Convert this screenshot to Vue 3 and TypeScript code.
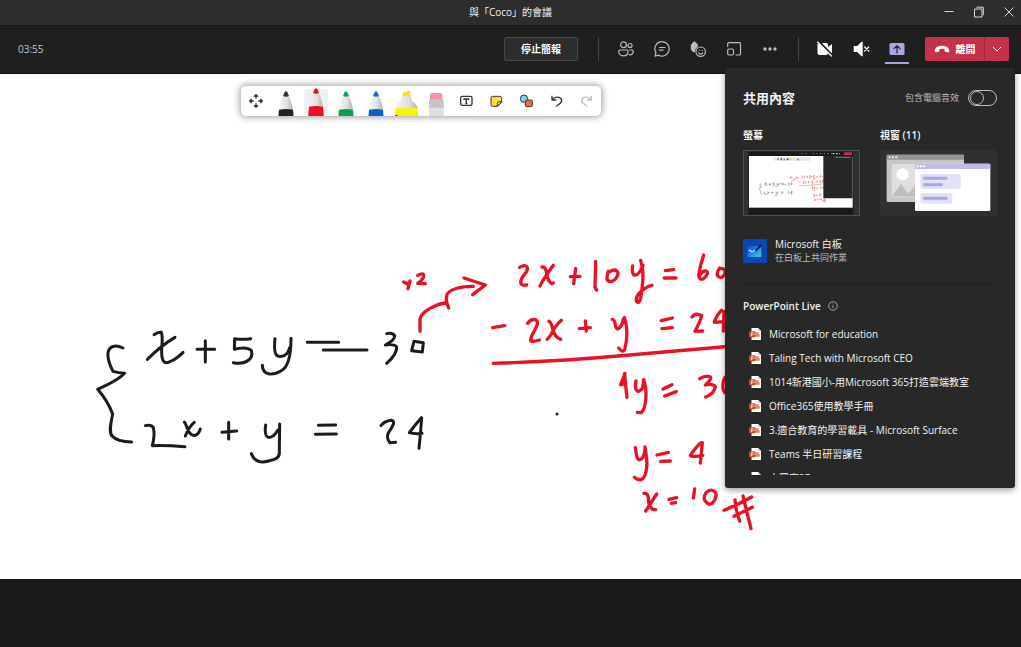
<script setup lang="ts">
import { ref } from 'vue'

interface Pen {
  label: string
  color: string
  tip: string
}

const pens: Pen[] = [
  { label: '黑色畫筆', color: '#222222', tip: '#333333' },
  { label: '紅色畫筆', color: '#e81224', tip: '#e81224' },
  { label: '綠色畫筆', color: '#0f9d4f', tip: '#12a354' },
  { label: '藍色畫筆', color: '#0a63c0', tip: '#1a6fc9' },
]
const activePen = ref(1)
const includeSound = ref(false)

const files: string[] = [
  'Microsoft for education',
  'Taling Tech with Microsoft CEO',
  '1014新港國小-用Microsoft 365打造雲端教室',
  'Office365使用教學手冊',
  '3.適合教育的學習載具 - Microsoft Surface',
  'Teams 半日研習課程',
  '大眾寓3D',
]
</script>

<template>
  <div class="app">
    <header class="titlebar">
      <h1 class="title">與「Coco」的會議</h1>
      <div class="window-controls">
        <button type="button" aria-label="最小化">
          <svg width="12" height="12" viewBox="0 0 12 12"><path d="M1.5 5.5h9" /></svg>
        </button>
        <button type="button" aria-label="還原">
          <svg width="12" height="12" viewBox="0 0 12 12"><path d="M1.5 3h7.500v8H1.500zM3.500 1.200H10.300v8" /></svg>
        </button>
        <button type="button" aria-label="關閉">
          <svg width="12" height="12" viewBox="0 0 12 12"><path d="M1.500 1.500l9 9M10.500 1.500l-9 9" /></svg>
        </button>
      </div>
    </header>

    <nav class="toolbar">
      <time class="timer">03:55</time>
      <button type="button" class="stop">停止簡報</button>
      <span class="rule rule-first"></span>
      <button type="button" class="tool" aria-label="參與者">
        <svg width="18" height="18" viewBox="0 0 18 18">
          <circle cx="6.500" cy="4.800" r="2.900" /><circle cx="13" cy="5.500" r="2" />
          <path d="M1.700 11.200c0-.7.500-1.200 1.200-1.200h7c.7 0 1.200.5 1.200 1.200 0 3-1.700 4.700-4.700 4.700s-4.700-1.700-4.700-4.700zM12.800 10h2.200c.8 0 1.300.5 1.300 1.200 0 2.400-1.400 3.700-4 3.600" />
        </svg>
      </button>
      <button type="button" class="tool" aria-label="聊天">
        <svg width="18" height="18" viewBox="0 0 18 18">
          <path d="M9 1.700a7.200 7.200 0 1 1-3.400 13.500L2 16.200l1-3.500A7.200 7.200 0 0 1 9 1.700zM6.500 7.500h5.500M6.500 10.200h3.500" />
        </svg>
      </button>
      <button type="button" class="tool" aria-label="反應">
        <svg width="18" height="18" viewBox="0 0 18 18">
          <path class="solid" d="M1.800 8.500V4.600q.6-.8 1.200 0V2.800q.7-.8 1.400 0V1.700q.7-.8 1.500 0v.8q.8-.8 1.500 0v1.300q.7-.6 1.300.2v3q-2.700 1.400-2.900 5.500C3.600 12.200 2.300 10.500 1.800 8.500z" />
          <circle cx="11.700" cy="11.700" r="4.700" />
          <path d="M9.700 12.900c1 1.500 3 1.500 4 0M10.200 10.300h.1M13.200 10.300h.1" />
        </svg>
      </button>
      <button type="button" class="tool" aria-label="分組討論室">
        <svg width="18" height="18" viewBox="0 0 18 18">
          <path d="M2.700 6.500V4c0-.8.500-1.300 1.300-1.300h10.200c.8 0 1.300.5 1.300 1.300v9.700c0 .8-.5 1.300-1.300 1.300H11" />
          <rect x="2.700" y="9" width="5.800" height="6" rx="1.200" />
        </svg>
      </button>
      <button type="button" class="tool" aria-label="更多動作">
        <svg width="18" height="18" viewBox="0 0 18 18">
          <g class="solid"><circle cx="4" cy="9" r="1.700" /><circle cx="9" cy="9" r="1.700" /><circle cx="14" cy="9" r="1.700" /></g>
        </svg>
      </button>
      <span class="rule rule-second"></span>
      <button type="button" class="tool bright" aria-label="開啟相機">
        <svg width="18" height="18" viewBox="0 0 18 18">
          <path class="solid" d="M3.500 3h6.500c1.100 0 2 .9 2 2v2l4-3v10l-4-3v2c0 1.100-.9 2-2 2H3.500c-1.100 0-2-.9-2-2V5c0-1.100.9-2 2-2z" />
          <path class="cut" d="M2.500 1l14 14.500" /><path d="M1.500 2l14 14" />
        </svg>
      </button>
      <button type="button" class="tool bright" aria-label="關閉音訊">
        <svg width="18" height="18" viewBox="0 0 18 18">
          <path class="solid" d="M1.700 6h3.500L9.500 1.800h1.200v14.400H9.500L5.200 12H1.700z" />
          <path d="M12.700 7l4 4M16.700 7l-4 4" />
        </svg>
      </button>
      <button type="button" class="tool sharing" aria-label="分享">
        <svg width="18" height="18" viewBox="0 0 18 18">
          <rect x="1.500" y="3" width="15" height="12" rx="1.500" />
          <path d="M9 13V6M6 8.700l3-3 3 3" />
        </svg>
      </button>
      <div class="leave">
        <button type="button" class="hang-up">
          <svg width="16" height="16" viewBox="0 0 16 16"><path d="M.8 10.300c-.4-3.200 2.700-5.600 7.200-5.600s7.600 2.400 7.200 5.600c-.1.700-.6 1-1.200.9l-2.400-.5c-.6-.1-1-.5-1-1.100V8.200c-1.600-.6-3.600-.6-5.200 0v1.400c0 .6-.4 1-1 1.100l-2.400.5c-.6.100-1.100-.2-1.200-.9z" /></svg>
          <span>離開</span>
        </button>
        <button type="button" class="leave-more" aria-label="離開選項">
          <svg width="10" height="10" viewBox="0 0 10 10"><path d="M1 3l4 4 4-4" /></svg>
        </button>
      </div>
    </nav>

    <main class="stage">
      <svg class="board" viewBox="0 0 1021 505" preserveAspectRatio="xMinYMin meet" role="img" aria-label="白板上的聯立方程式">
        <g id="ink" class="ink">
          <g class="black" transform="translate(80 236) scale(.33333)">
            <path d="M129 114C105 103 88 108 84 128C81 150 91 168 99 184Q116 189 134 190C112 213 85 223 53 238Q82 271 98 312C93 337 85 367 97 379Q111 395 155 396" />
            <path d="M222 74Q235 65 244 67C252 87 240 123 247 145Q251 166 274 153Q290 146 309 127M285 82C252 101 226 124 202 148" />
            <path d="M351 118L404 118M376 92L376 156M512 86Q487 90 464 86L463 118Q498 108 514 121C522 149 494 165 460 158" />
            <path d="M585 86C582 113 584 137 596 139Q621 143 629 113M633 85C633 128 627 171 604 182C577 198 548 196 547 166" />
            <path d="M682 97L776 97M730 120L861 120M920 71Q937 66 944 77Q945 90 916 105Q944 101 950 111C951 127 936 146 920 160" />
            <path d="M1002 94L1030 98L1027 126L995 122Z" />
            <path d="M196 347Q214 342 220 353C224 369 222 388 217 407Q262 406 315 410M313 336C323 347 322 373 340 376Q354 378 361 357M343 337Q327 350 316 378" />
            <path d="M426 367L470 363M446 337L446 387M557 345C554 366 556 379 565 382Q580 384 594 360M599 342L598 427C599 444 586 449 566 453Q527 464 514 431" />
            <path d="M715 346L767 345M706 373L769 372M903 347Q914 333 934 331C949 334 937 350 925 369Q918 384 930 398L947 397M1024 323Q1004 346 988 368Q1004 373 1026 370M1025 324Q1022 368 1017 415" />
          </g>
          <g class="red" transform="translate(390 176) scale(.33333)">
            <path d="M41 96L53 102M60 93L54 116M83 76Q101 66 101 78Q101 88 83 100L106 101M90 244L90 208C93 183 145 160 167 159M176 174Q166 153 170 137C174 116 220 108 250 109M222 84L286 105L248 134" />
            <path d="M389 52Q407 41 412 53C416 69 393 77 392 96Q392 108 410 105M456 51Q468 50 470 71Q474 94 485 101L490 99M490 46Q475 67 459 91L450 108" />
            <path d="M557 56L551 101M541 80L570 79M617 34L615 112L620 120M655 64Q649 82 652 90C665 104 684 83 684 69Q678 52 656 67M728 48Q724 73 734 75Q745 79 759 46M752 31Q763 70 757 105Q753 159 744 157C728 151 749 116 786 106" />
            <path d="M826 62L851 59M823 84L858 84M941 15Q930 48 926 75C928 104 956 76 952 66C946 56 930 69 927 81M989 54Q980 65 982 76C992 92 1010 75 1004 58Z" />
            <path d="M308 233L344 227M413 220Q421 206 437 209C455 220 424 247 422 270Q424 278 448 270M477 214Q484 217 488 237Q494 262 512 268M514 211Q494 229 483 254L472 268" />
            <path d="M586 213L589 243M568 236L601 233M667 208Q675 209 676 226C679 249 697 230 700 207M703 203C715 236 710 275 704 299Q699 310 686 294" />
            <path d="M814 212L847 204M816 236L847 233M906 201Q917 187 935 197Q930 216 915 244L938 243M994 181Q977 200 973 217L1013 214M1002 184L1000 243M310 340Q520 333 684 318L1030 288" />
          </g>
          <g class="red" transform="translate(540 276) scale(.33333)">
            <path d="M255 71L242 104Q250 106 255 90M254 70Q256 105 261 142M288 93C283 118 291 136 308 114L311 89C322 121 320 171 304 188L292 187" />
            <path d="M369 117L396 104M374 138L409 125M479 86Q502 73 512 82Q513 91 496 105Q519 99 526 110Q524 130 497 141M565 76C546 79 543 126 559 130Q579 118 573 95" />
            <path d="M286 293C289 314 291 337 304 327Q316 315 315 291C318 313 323 333 320 352C316 388 302 398 283 382" />
            <path d="M351 315L385 307M362 334L391 333M483 278Q466 292 451 317Q463 322 488 316M487 278L481 339M312 430Q326 427 326 455Q330 480 347 479M350 432L317 483" />
            <path d="M387 448L410 443M394 460L407 458M464 417L460 444M499 427Q486 446 499 457C514 476 532 443 527 428Q514 413 499 427" />
            <path d="M552 481Q596 463 635 441M582 499L637 472M585 450Q588 488 599 513M609 438Q621 488 633 536" />
          </g>
        </g>
        <circle class="dot" cx="557" cy="340" r="1.500" />
      </svg>

      <div class="pen-bar" role="toolbar" aria-label="畫筆工具">
        <button type="button" aria-label="移動工具列">
          <svg viewBox="0 0 90 90">
            <g class="line"><path d="M39 32l6-6 6 6M39 58l6 6 6-6M32 39l-6 6 6 6M58 39l6 6-6 6M45 27v11M45 52v11M27 45h11M52 45h11" /></g>
          </svg>
        </button>
        <button
          v-for="(pen, i) in pens"
          :key="pen.label"
          type="button"
          :aria-label="pen.label"
          :aria-pressed="activePen === i"
          @click="activePen = i"
        >
          <svg viewBox="0 0 90 90">
            <defs>
              <linearGradient id="barrel"><stop offset="0" stop-color="#f4f4f4" /><stop offset=".55" stop-color="#e2e2e2" /><stop offset="1" stop-color="#b4b4b4" /></linearGradient>
            </defs>
            <rect v-if="activePen === i" x="10" y="9" width="71" height="72" rx="6" fill="#efefef" />
            <g :transform="activePen === i ? 'translate(0 -9)' : undefined">
              <path d="M37 29h16c7 14 11 28 13 42H24c2-14 6-28 13-42z" fill="url(#barrel)" />
              <path d="M41 18q4-4 8 0l5 12q-9 4-18 0z" :fill="pen.tip" />
              <path d="M24 71q21-4 42 0l3 34H21z" :fill="pen.color" />
            </g>
          </svg>
        </button>
        <button type="button" aria-label="螢光筆">
          <svg viewBox="0 0 90 90">
            <path d="M36 19l22-5v18H34z" fill="#ffe600" />
            <path d="M32 30h28l3 16q15 8 17 22H14q2-14 15-22z" fill="url(#barrel)" />
            <path d="M14 67h66l2 23H12z" fill="#fbf500" /><circle cx="16" cy="90" r="4" fill="#e81224" />
          </svg>
        </button>
        <button type="button" aria-label="橡皮擦">
          <svg viewBox="0 0 90 90">
            <path d="M27 42V28q0-7 7-7h23q7 0 7 7v14z" fill="#f993a4" />
            <path d="M24 41h44v50H24z" fill="#dedfe2" /><path d="M24 41h44v24H24z" fill="#c4c5c9" />
          </svg>
        </button>
        <button type="button" aria-label="文字">
          <svg viewBox="0 0 90 90">
            <g class="line"><rect x="29" y="31" width="34" height="27" rx="5" /><path d="M39 42v-3h14v3M46 39v14M43 53h6" /></g>
          </svg>
        </button>
        <button type="button" aria-label="便利貼">
          <svg viewBox="0 0 90 90">
            <path class="edge" d="M35 31h21q6 0 6 6v12L50 61H35q-5 0-5-5V36q0-5 5-5z" fill="#ffdb3b" />
            <path class="edge" d="M62 47h-8q-5 0-5 5v9z" fill="#fff0a0" />
          </svg>
        </button>
        <button type="button" aria-label="圖形">
          <svg viewBox="0 0 90 90">
            <circle class="edge" cx="39" cy="38" r="11" fill="#83cdf2" />
            <rect class="edge" x="43" y="42" width="21" height="20" rx="4" fill="#f36b3b" />
          </svg>
        </button>
        <button type="button" aria-label="復原">
          <svg viewBox="0 0 90 90"><g class="line"><path d="M33 29v13h13M34 41c9-12 27-9 28 3 0 8-9 11-17 17" /></g></svg>
        </button>
        <button type="button" aria-label="取消復原">
          <svg viewBox="0 0 90 90"><g class="line faded"><path d="M61 29v13H48M60 41c-9-12-27-9-28 3 0 8 9 11 17 17" /></g></svg>
        </button>
      </div>
    </main>

    <footer class="base"></footer>

    <aside class="panel" aria-label="共用內容">
      <div class="panel-head">
        <h2>共用內容</h2>
        <label for="sound">包含電腦音效</label>
        <input id="sound" v-model="includeSound" type="checkbox" role="switch" />
      </div>

      <div class="sources">
        <section>
          <h3>螢幕</h3>
          <button type="button" class="thumb screen" aria-label="共用螢幕">
            <svg viewBox="0 0 351 198">
              <rect width="351" height="198" fill="#303030" />
              <rect x="16" y="5" width="315" height="189" fill="#191919" />
              <rect x="18" y="18" width="311" height="155" fill="#fff" />
              <rect x="91" y="22" width="113" height="10" rx="4" fill="#e6e6e6" />
              <path d="M105 30v-5m10 5v-6m20 6v-5" stroke="#444" stroke-width="3" />
              <path d="M115 31v-6m50 6v-5" stroke="#e81224" stroke-width="4" />
              <path d="M124 31v-5" stroke="#0f9d4f" stroke-width="4" /><path d="M133 31v-5" stroke="#0a63c0" stroke-width="4" />
              <path d="M142 31v-6" stroke="#e8e100" stroke-width="5" />
              <use href="#ink" transform="translate(18 19) scale(.305)" />
              <path d="M241 17h88v128h-88z" fill="#262626" />
              <path d="M176 11h16M209 11h60" stroke="#888" stroke-width="3" stroke-dasharray="4 7" />
              <path d="M269 11h22" stroke="#ddd" stroke-width="4" stroke-dasharray="5 5" />
              <path d="M303 11h24" stroke="#c4314b" stroke-width="8" />
              <path d="M276 22h46" stroke="#777" stroke-width="3" />
            </svg>
          </button>
        </section>
        <section>
          <h3>視窗 (11)</h3>
          <button type="button" class="thumb" aria-label="共用視窗">
            <svg viewBox="0 0 351 198">
              <rect x="20" y="14" width="232" height="142" rx="4" fill="#c8c6c4" />
              <path d="M24 14h224q4 0 4 4v11H20V18q0-4 4-4z" fill="#979593" />
              <path d="M26 22h28" stroke="#e8e8e8" stroke-width="6" stroke-dasharray="6 4" />
              <rect x="35" y="42" width="100" height="100" fill="#e1dfdd" />
              <circle cx="68" cy="73" r="18" fill="#fff" />
              <path d="M35 139l28-38 22 31 25-32 30 40z" fill="#c0bebc" />
              <rect x="105" y="41" width="226" height="142" rx="4" fill="#fff" />
              <path d="M109 41h218q4 0 4 4v12H105V45q0-4 4-4z" fill="#bdbde6" />
              <path d="M110 49h28" stroke="#fff" stroke-width="6" stroke-dasharray="6 4" />
              <rect x="121" y="71" width="121" height="46" rx="6" fill="#e2e2f6" />
              <rect x="121" y="129" width="96" height="32" rx="6" fill="#e2e2f6" />
              <path d="M130 85h72M130 104h58M130 145h72" stroke="#a6a7dc" stroke-width="9" />
            </svg>
          </button>
        </section>
      </div>

      <button type="button" class="whiteboard">
        <svg width="24" height="24" viewBox="0 0 72 72">
          <defs><linearGradient id="sea" x2="1" y2="1"><stop offset="0" stop-color="#1a3cff" /><stop offset=".5" stop-color="#1b8cf0" /><stop offset="1" stop-color="#35d6c8" /></linearGradient></defs>
          <rect width="72" height="72" rx="2" fill="#0a47b0" />
          <path d="M14 21h41v33H19q-5 0-5-5z" fill="url(#sea)" />
          <path d="M18 34q5-4 8 5 6-1 11-6" fill="none" stroke="#fff" stroke-width="3" stroke-linecap="round" />
          <path d="M37 35l19-17" stroke="#14223a" stroke-width="6" />
        </svg>
        <span class="whiteboard-text">
          <span class="name">Microsoft 白板</span>
          <span class="hint">在白板上共同作業</span>
        </span>
      </button>

      <div class="live-head">
        <h3>PowerPoint Live</h3>
        <svg width="10" height="10" viewBox="0 0 10 10"><circle cx="5" cy="5" r="4.300" /><path d="M5 4.500v2.800M5 2.600v.8" /></svg>
      </div>
      <ul class="files">
        <li v-for="name in files" :key="name">
          <button type="button">
            <svg width="12" height="12" viewBox="0 0 12 12">
              <path d="M2.500 0H9l3 3v9H2.500z" fill="#fff" /><path d="M9 0v3h3z" fill="#cfcfcf" />
              <path d="M6.500 4.500a2.500 2.500 0 0 1 3.500 3.500H6.500z" fill="#f0906f" /><path d="M6.500 8h4.300" stroke="#d35230" />
              <rect y="3.200" width="6.500" height="6" rx=".8" fill="#d24726" />
              <path d="M2.400 8.200V4.600h1.200q1.100 0 1.100 1.100T3.600 6.800H2.400" fill="none" stroke="#fff" stroke-width=".7" />
            </svg>
            <span>{{ name }}</span>
          </button>
        </li>
      </ul>
    </aside>
  </div>
</template>

<style>
body {
  margin: 0;
  background: #1a1a1a;
}
</style>

<style scoped>
.app {
  position: relative;
  display: flex;
  flex-direction: column;
  min-height: 100vh;
  overflow: hidden;
  color: #f3f3f3;
  font-family: 'Open Sans', 'Noto Sans CJK TC', sans-serif;
  font-size: 10px;
  line-height: 16px;
}
* {
  box-sizing: border-box;
}
h1,
h2,
h3,
ul {
  margin: 0;
  padding: 0;
}
button {
  margin: 0;
  padding: 0;
  border: 0;
  background: none;
  color: inherit;
  font: inherit;
  cursor: pointer;
}
svg {
  display: block;
}

.titlebar {
  display: grid;
  grid-template-columns: 1fr auto 1fr;
  align-items: center;
  height: 26px;
  padding-bottom: 2px;
  border-bottom: 1px solid #171717;
  background: #2d2d2d;
}
.title {
  grid-column: 2;
  font-size: 10px;
  font-weight: 400;
}
.window-controls {
  display: flex;
  justify-content: flex-end;
  gap: 18px;
  padding-right: 6px;
}
.window-controls svg {
  fill: none;
  stroke: #d8d8d8;
  stroke-width: 1;
}

.toolbar {
  display: flex;
  align-items: center;
  height: 48px;
  padding: 0 12px 2px 18px;
  border-bottom: 1px solid #141414;
  background: #1f1f1f;
}
.timer {
  margin-right: auto;
  color: #c8c8c8;
}
.stop {
  width: 74px;
  height: 24px;
  border: 1px solid #484848;
  border-radius: 2px;
  background: #2d2d2d;
  color: #fff;
  font-weight: 600;
}
.rule {
  width: 1px;
  height: 24px;
  background: #484848;
}
.rule-first {
  margin: 0 9px 0 20px;
}
.rule-second {
  margin: 0 8px 0 10px;
}
.tool {
  display: grid;
  place-items: center;
  width: 36px;
  height: 30px;
}
.tool svg {
  fill: none;
  stroke: #bdbdbd;
  stroke-width: 1.2;
  stroke-linecap: round;
  stroke-linejoin: round;
}
.tool .solid {
  fill: #bdbdbd;
  stroke: none;
}
.bright svg {
  stroke: #fff;
}
.bright .solid {
  fill: #fff;
}
.bright .cut {
  stroke: #1f1f1f;
  stroke-width: 2;
}
.sharing {
  background: linear-gradient(#a6a7dc, #a6a7dc) center bottom / 24px 2px no-repeat;
}
.sharing rect {
  fill: #a6a7dc;
  stroke: none;
}
.sharing path {
  stroke: #252540;
}
.leave {
  display: flex;
  width: 84px;
  height: 24px;
  margin-left: 10px;
  border-radius: 2px;
  background: #c4314b;
  color: #fff;
  font-weight: 700;
}
.hang-up {
  display: flex;
  flex: 1;
  align-items: center;
  justify-content: center;
  gap: 6px;
}
.hang-up svg {
  fill: #fff;
}
.leave-more {
  display: grid;
  place-items: center;
  width: 25px;
  border-left: 1px solid #a5283f;
}
.leave-more svg {
  fill: none;
  stroke: #fff;
}

.stage {
  position: relative;
  flex: 1;
  background: #fff;
}
.board {
  width: 100%;
}
.ink {
  fill: none;
  stroke-linecap: round;
  stroke-linejoin: round;
}
.black {
  stroke: #1c1c1c;
  stroke-width: 9;
}
.red {
  stroke: #e81224;
  stroke-width: 10;
}
.dot {
  fill: #1c1c1c;
}
.pen-bar {
  position: absolute;
  top: 12px;
  left: 241px;
  display: flex;
  border-radius: 5px;
  background: #fff;
  box-shadow: 0 0 7px 1px rgba(0, 0, 0, 0.4);
}
.pen-bar button,
.pen-bar svg {
  width: 30px;
  height: 30px;
}
.line {
  fill: none;
  stroke: #333;
  stroke-width: 4;
  stroke-linejoin: round;
}
.faded {
  stroke: #bdbdbd;
}
.edge {
  stroke: #3b3b3b;
  stroke-width: 3;
}

.base {
  height: 68px;
  background: #1a1a1a;
}

.panel {
  position: absolute;
  top: 68px;
  right: 6px;
  width: 290px;
  padding: 18px 18px 13px;
  border-radius: 3px;
  background: #282828;
  box-shadow: 0 2px 6px rgba(0, 0, 0, 0.4);
}
.panel-head {
  display: flex;
  align-items: center;
  height: 24px;
}
.panel-head h2 {
  margin-right: auto;
  font-size: 13px;
  font-weight: 600;
}
.panel-head label {
  color: #bdbdbd;
  font-size: 9px;
}
.panel-head input {
  display: flex;
  align-items: center;
  width: 29px;
  height: 16px;
  margin: 0 0 0 9px;
  padding: 1px;
  border: 1px solid #bdbdbd;
  border-radius: 8px;
  appearance: none;
}
.panel-head input::before {
  width: 12px;
  height: 12px;
  border: 1px solid #bdbdbd;
  border-radius: 50%;
  content: '';
}
.panel-head input:checked {
  justify-content: flex-end;
}
h3 {
  font-size: 10px;
  font-weight: 600;
}
.sources {
  display: grid;
  grid-template-columns: 1fr 1fr;
  gap: 20px;
  margin-top: 17px;
}
.thumb {
  display: block;
  width: 100%;
  margin-top: 7px;
  border-radius: 3px;
  overflow: hidden;
  background: #303030;
}
.screen {
  border-radius: 0;
  outline: 1px solid #505050;
  outline-offset: -1px;
}
.thumb svg {
  width: 100%;
}
.whiteboard {
  display: flex;
  align-items: center;
  gap: 8px;
  width: 100%;
  height: 68px;
  padding-top: 3px;
  border-bottom: 1px solid #1f1f1f;
  text-align: left;
}
.whiteboard-text {
  display: grid;
  line-height: 13px;
}
.hint {
  color: #bdbdbd;
  font-size: 9px;
}
.live-head {
  display: flex;
  align-items: center;
  gap: 7px;
  margin-top: 14px;
}
.live-head svg {
  fill: none;
  stroke: #bdbdbd;
  stroke-width: 0.8;
}
.files {
  height: 153px;
  margin-top: 8px;
  overflow: hidden;
  list-style: none;
}
.files button {
  display: flex;
  align-items: center;
  gap: 8px;
  width: 100%;
  height: 24px;
  padding-left: 6px;
  text-align: left;
  white-space: nowrap;
}
</style>
